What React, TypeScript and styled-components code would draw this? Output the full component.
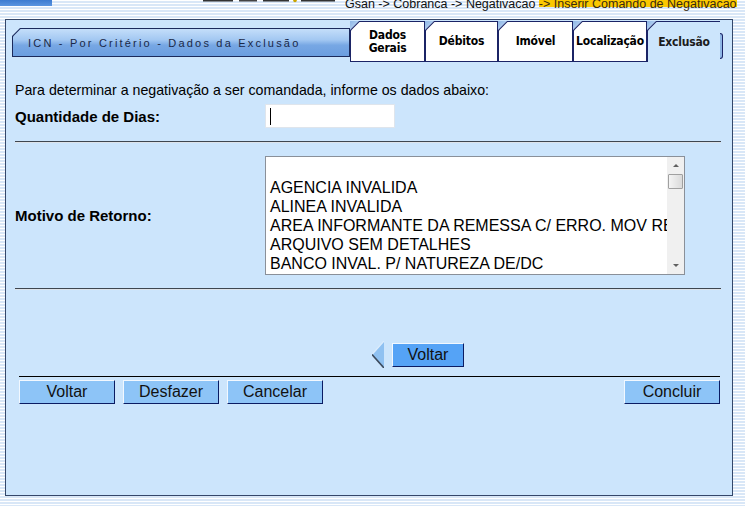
import React from 'react';
import styled, {createGlobalStyle} from 'styled-components';

const GlobalStyle = createGlobalStyle`
  html, body {
    margin: 0;
    padding: 0;
  }
  body {
    width: 745px;
    height: 506px;
    overflow: hidden;
    font-family: "Liberation Sans", Arial, sans-serif;
    background: repeating-linear-gradient(
      to bottom,
      #ffffff 0,
      #ffffff 1px,
      #d9e7f7 1px,
      #d9e7f7 3px
    );
  }
`;

const Page = styled.div`
  width: 745px;
  height: 506px;
`;

const TopStrip = styled.div`
  height: 19px;
  display: flex;
  align-items: flex-start;
  overflow: hidden;
`;

const TopBar = styled.div`
  width: 52px;
  height: 6px;
  background: linear-gradient(to bottom, #3d7bd0, #5b95e0);
`;

const LogoStub = styled.svg`
  margin-left: 151px;
  flex-shrink: 0;
`;

const Breadcrumb = styled.div`
  margin-left: 7px;
  margin-top: -2px;
  font-size: 12.5px;
  line-height: 12px;
  color: #111;
  white-space: nowrap;
`;

const Highlight = styled.span`
  color: #3a2a10;
  background: linear-gradient(to bottom, #fbc800 0, #fbc800 72%, transparent 72%);
`;

const Panel = styled.div`
  box-sizing: border-box;
  margin-left: 5px;
  width: 728px;
  height: 477px;
  border: 1px solid #34476a;
  background: #cce5fc;
`;

const TabRow = styled.div`
  display: flex;
  align-items: flex-start;
  height: 41px;
  margin-top: 1px;
  padding-left: 6px;
`;

const TitleFrame = styled.div`
  margin-top: 7px;
  width: 338px;
  height: 29px;
  box-sizing: border-box;
  padding: 1px;
  background: #1b2a5c;
  clip-path: polygon(8px 0, 100% 0, 100% 100%, 0 100%, 0 8px);
`;

const TitleFace = styled.div`
  height: 100%;
  display: flex;
  align-items: center;
  padding-left: 15px;
  background: linear-gradient(to bottom, #c4defa 0%, #a3c8f2 40%, #77a7e4 60%, #6b9ee0 100%);
  clip-path: polygon(7.5px 0, 100% 0, 100% 100%, 0 100%, 0 7.5px);
  font-size: 11px;
  letter-spacing: 2.2px;
  color: #1a2848;
`;

const TabSlot = styled.div<{$w: number}>`
  width: ${p => p.$w}px;
  height: 41px;
  flex-shrink: 0;
  background: linear-gradient(135deg, #8fb7e6 0, #a9c9ee 6px, transparent 6px);
`;

const TabFrame = styled.div<{$active?: boolean}>`
  box-sizing: border-box;
  height: 100%;
  padding: ${p => (p.$active ? '1px 0 0 1px' : '1px')};
  background: #1b2466;
  clip-path: polygon(9px 0, 100% 0, 100% 100%, 0 100%, 0 9px);
`;

const TabFace = styled.div<{$active?: boolean}>`
  height: 100%;
  display: flex;
  align-items: center;
  justify-content: center;
  text-align: center;
  background: ${p => (p.$active ? '#cce5fc' : '#ffffff')};
  clip-path: polygon(8.5px 0, 100% 0, 100% 100%, 0 100%, 0 8.5px);
  font-family: "Liberation Sans Narrow", "DejaVu Sans Condensed", "Liberation Sans", sans-serif;
  font-weight: bold;
  font-size: 12px;
  line-height: 13px;
  letter-spacing: -0.2px;
  color: ${p => (p.$active ? '#1c1c1c' : '#000')};
`;

const Bracket = styled.span`
  align-self: flex-start;
  margin-top: 12px;
  width: 2px;
  height: 24px;
  border: 1px solid #1b2466;
  border-left: none;
  border-radius: 0 3px 3px 0;
  background: #8fb7e6;
`;

const Content = styled.div`
  padding: 0 11px 0 9px;
`;

const Intro = styled.div`
  margin-top: 20px;
  font-size: 14.2px;
  line-height: 16px;
  color: #000;
`;

const FieldRow = styled.div<{$gap: number}>`
  display: grid;
  grid-template-columns: 250px 1fr;
  align-items: center;
  margin-top: ${p => p.$gap}px;
`;

const Label = styled.div`
  font-size: 15px;
  font-weight: bold;
  color: #000;
`;

const TextBox = styled.div`
  box-sizing: border-box;
  width: 130px;
  height: 24px;
  border: 1px solid #dfe5ec;
  background: #fff;
  display: flex;
  align-items: center;
  padding-left: 4px;
`;

const Caret = styled.span`
  width: 1px;
  height: 17px;
  background: #000;
`;

const Rule = styled.div`
  margin: 13px 0;
  border-top: 1px solid #3e4650;
  border-bottom: 1px solid #dde3ea;
`;

const ListBox = styled.div`
  box-sizing: border-box;
  width: 420px;
  height: 119px;
  border: 1px solid #8a9099;
  background: #fff;
  display: flex;
`;

const ListItems = styled.div`
  flex: 1;
  overflow: hidden;
  padding: 2px 0 0 4px;
  font-size: 16px;
  line-height: 19px;
  color: #000;
  white-space: nowrap;
`;

const ListItem = styled.div`
  height: 19px;
`;

const ScrollTrack = styled.div`
  width: 17px;
  background: #f0f0f0;
  display: flex;
  flex-direction: column;
  align-items: center;
`;

const ScrollArrow = styled.div<{$down?: boolean}>`
  width: 17px;
  height: 17px;
  display: flex;
  align-items: center;
  justify-content: center;
  ${p => (p.$down ? 'margin-top: auto;' : '')}
  &::after {
    content: '';
    border-left: 3px solid transparent;
    border-right: 3px solid transparent;
    ${p => (p.$down ? 'border-top: 3px solid #606060;' : 'border-bottom: 3px solid #606060;')}
  }
`;

const ScrollThumb = styled.div`
  box-sizing: border-box;
  width: 15px;
  height: 15px;
  border: 1px solid #a0a0a0;
  border-radius: 1px;
  background: linear-gradient(to right, #f4f4f4, #dadada);
`;

const BackRow = styled.div`
  display: flex;
  align-items: center;
  gap: 8px;
  margin-top: 51px;
  padding-left: 357px;
  height: 27px;
`;

const Button = styled.button<{$strong?: boolean}>`
  box-sizing: border-box;
  width: ${p => (p.$strong ? 72 : 96)}px;
  height: 24px;
  padding: 0;
  border-style: solid;
  border-width: 1px;
  border-color: #f2f8ff #0b1c63 #0b1c63 #f2f8ff;
  background: ${p => (p.$strong ? '#55a3f6' : '#8dc4f7')};
  font-family: "Liberation Sans", Arial, sans-serif;
  font-size: 16px;
  color: #111;
  cursor: pointer;
`;

const Footer = styled.div`
  margin: 8px 1px 0 4px;
  border-top: 1px solid #000;
  padding-top: 3px;
  display: flex;
  gap: 8px;
`;

const Spacer = styled.div`
  flex: 1;
`;

const motivos = [
  '',
  'AGENCIA INVALIDA',
  'ALINEA INVALIDA',
  'AREA INFORMANTE DA REMESSA C/ ERRO. MOV RECUSADO',
  'ARQUIVO SEM DETALHES',
  'BANCO INVAL. P/ NATUREZA DE/DC',
  'BANCO INVALIDO',
];

const tabs = [
  {label: ['Dados', 'Gerais'], w: 75},
  {label: ['Débitos'], w: 73},
  {label: ['Imóvel'], w: 75},
  {label: ['Localização'], w: 74},
  {label: ['Exclusão'], w: 73, active: true},
];

const BackArrow = () => (
  <svg width="12" height="27" viewBox="0 0 12 27">
    <polygon points="12,0 0,13.5 12,27" fill="#8fc1f1" />
    <polyline points="12,0 0,13.5" stroke="#dcecfc" strokeWidth="1.2" fill="none" />
    <polyline points="0,13.5 12,27" stroke="#3c4a5c" strokeWidth="1.6" fill="none" />
  </svg>
);

const App = (): JSX.Element => {
  return (
    <Page>
      <GlobalStyle />
      <TopStrip>
        <TopBar />
        <LogoStub width="135" height="3" viewBox="0 0 135 3">
          <rect x="0" y="0" width="30" height="1.5" fill="#333" />
          <rect x="36" y="0" width="18" height="1.5" fill="#444" />
          <rect x="60" y="0" width="26" height="1.5" fill="#333" />
          <circle cx="92" cy="0.5" r="1.8" fill="#c9a400" />
          <rect x="98" y="0" width="34" height="1.5" fill="#333" />
        </LogoStub>
        <Breadcrumb>
          Gsan -&gt; Cobranca -&gt; Negativacao <Highlight>-&gt; Inserir Comando de Negativacao</Highlight>
        </Breadcrumb>
      </TopStrip>

      <Panel>
        <TabRow>
          <TitleFrame>
            <TitleFace>ICN - Por Critério - Dados da Exclusão</TitleFace>
          </TitleFrame>
          {tabs.map(t => (
            <TabSlot key={t.label.join(' ')} $w={t.w}>
              <TabFrame $active={t.active}>
                <TabFace $active={t.active}>
                  <div>
                    {t.label.map(l => (
                      <div key={l}>{l}</div>
                    ))}
                  </div>
                </TabFace>
              </TabFrame>
            </TabSlot>
          ))}
          <Bracket />
        </TabRow>

        <Content>
          <Intro>Para determinar a negativação a ser comandada, informe os dados abaixo:</Intro>
          <FieldRow $gap={6}>
            <Label>Quantidade de Dias:</Label>
            <TextBox>
              <Caret />
            </TextBox>
          </FieldRow>

          <Rule />

          <FieldRow $gap={0}>
            <Label>Motivo de Retorno:</Label>
            <ListBox>
              <ListItems>
                {motivos.map((m, i) => (
                  <ListItem key={i}>{m}</ListItem>
                ))}
              </ListItems>
              <ScrollTrack>
                <ScrollArrow />
                <ScrollThumb />
                <ScrollArrow $down />
              </ScrollTrack>
            </ListBox>
          </FieldRow>

          <Rule />

          <BackRow>
            <BackArrow />
            <Button $strong>Voltar</Button>
          </BackRow>

          <Footer>
            <Button>Voltar</Button>
            <Button>Desfazer</Button>
            <Button>Cancelar</Button>
            <Spacer />
            <Button>Concluir</Button>
          </Footer>
        </Content>
      </Panel>
    </Page>
  );
};

export default App;
